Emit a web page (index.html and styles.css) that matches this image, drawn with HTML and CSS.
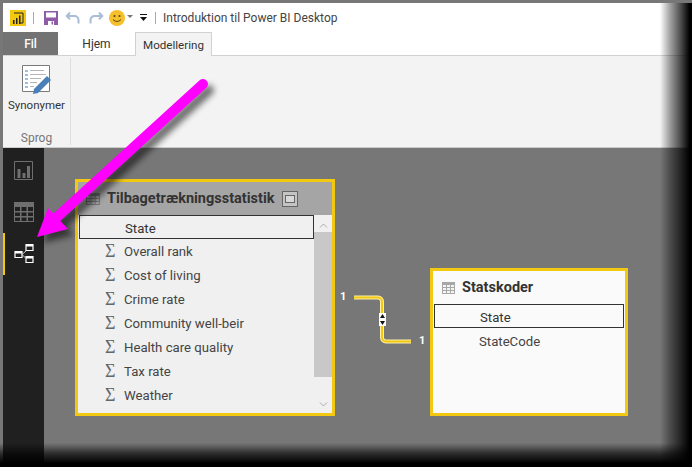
FILE: index.html
```html
<!DOCTYPE html>
<html lang="en">
<head>
  <meta charset="UTF-8" />
  <title>Introduktion til Power BI Desktop</title>
  <link rel="stylesheet" href="styles.css">
</head>
<body>
  <div class="app">
    <div class="titleBar">
      <svg class="pbiLogo" width="16" height="16" viewBox="0 0 16 16">
        <rect width="16" height="16" fill="#f2c811"/>
        <path d="M4 3h9v10h-3" fill="none" stroke="#222" stroke-width="1"/>
        <path d="M3 10h1.500v4H3zM6 8h1.500v6H6zM9 5.500h1.500V14H9z" fill="#222"/>
      </svg>
      <span class="qaSep"></span>
      <svg class="qaIcon" width="14" height="14" viewBox="0 0 14 14">
        <path d="M0 0h14v14H0z" fill="#8e5ba6"/>
        <path d="M2 1.500h10v5H2z" fill="#fff"/>
        <path d="M4 10h6v4H4z" fill="#fff"/>
        <path d="M7.500 10.500h1.500v3H7.500z" fill="#8e5ba6"/>
      </svg>
      <svg class="qaUndo" width="16" height="14" viewBox="0 0 16 14">
        <path d="M5 1.500 1.800 5 5 8.200M2 5h7.500a4 4 0 0 1 4 4v3.500" fill="none" stroke="#a9bdd6" stroke-width="2"/>
      </svg>
      <svg class="qaRedo" width="16" height="14" viewBox="0 0 16 14">
        <path d="M11 1.500 14.200 5 11 8.200M14 5H6.500a4 4 0 0 0-4 4v3.500" fill="none" stroke="#a9bdd6" stroke-width="2"/>
      </svg>
      <svg class="qaSmile" width="16" height="16" viewBox="0 0 16 16">
        <circle cx="8" cy="8" r="8" fill="#f5c02c"/>
        <circle cx="5.500" cy="6" r="1.100" fill="#5a4a10"/>
        <circle cx="10.500" cy="6" r="1.100" fill="#5a4a10"/>
        <path d="M4 9.500q4 4 8 0" fill="none" stroke="#5a4a10" stroke-width="1"/>
      </svg>
      <span class="caretSmall"></span>
      <svg class="qaMore" width="7" height="7" viewBox="0 0 7 7">
        <path d="M0 0h7v1H0zM0 3h7L3.500 7z" fill="#111"/>
      </svg>
      <span class="qaSep qaSepLast"></span>
      <span class="docTitle">Introduktion til Power BI Desktop</span>
    </div>

    <div class="tabRow">
      <div class="tab tabFile">Fil</div>
      <div class="tab tabHome">Hjem</div>
      <div class="tab tabActive">Modellering</div>
    </div>

    <div class="ribbon">
      <div class="ribbonGroup">
        <div class="ribbonBtn">
          <svg width="30" height="30" viewBox="0 0 30 30">
            <path d="M.5.500h27v26H.5z" fill="#fff" stroke="#7a7a7a"/>
            <path d="M3 6h3M3 10h3M3 14h3M3 18h3M3 22h3" stroke="#3f7fbf"/>
            <path d="M8 5.500h14M8 9.500h16M8 13.500h11M8 17.500h7M8 21.500h4" stroke="#b5b5b5"/>
            <path d="M12 24 25 11l4 4-13 13-5 1z" fill="#4a7fb8"/>
          </svg>
          <span>Synonymer</span>
        </div>
        <div class="groupLabel">Sprog</div>
      </div>
    </div>

    <div class="workspace">
      <div class="sideNav">
        <div class="navItem">
          <svg width="19" height="19" viewBox="0 0 19 19">
            <path d="M.5.500h18v18H.5z" fill="none" stroke="#6f6f6f"/>
            <path d="M3.500 8h3v9h-3zM8.500 12h3v5h-3zM13 5h3v12h-3z" fill="#6f6f6f"/>
          </svg>
        </div>
        <div class="navItem">
          <svg width="20" height="20" viewBox="0 0 20 20">
            <path d="M0 0h20v20H0z" fill="#6f6f6f"/>
            <path d="M1 5h5v4H1zM7.500 5h5v4h-5zM14 5h5v4h-5zM1 10.500h5v3.500H1zM7.500 10.500h5v3.500h-5zM14 10.500h5v3.500h-5zM1 15.500h5V19H1zM7.500 15.500h5V19h-5zM14 15.500h5V19h-5z" fill="#202020"/>
          </svg>
        </div>
        <div class="navItem navCurrent">
          <svg width="20" height="20" viewBox="0 0 20 20">
            <path d="M1 7.500h7v6H1zM12 .500h7v6h-7zM12 12.500h7v6h-7z" fill="none" stroke="#fff" stroke-width="1.200"/>
            <path d="M1 7.500h7v2H1zM12 .500h7v2h-7zM12 12.500h7v2h-7z" fill="#fff"/>
            <path d="M8 10.500 12 7M8 10.500l4 4" fill="none" stroke="#ccc"/>
          </svg>
        </div>
      </div>

      <div class="canvas">
        <div class="tableCard cardStats">
          <div class="cardHead headDim">
            <svg class="gridIcon" width="14" height="12" viewBox="0 0 14 12">
              <path d="M0 0h14v12H0z" fill="#777"/>
              <path d="M1 3h3.500v2H1zM5.300 3h3.500v2H5.300zM9.600 3h3.400v2H9.600zM1 6h3.500v2H1zM5.300 6h3.500v2H5.300zM9.600 6h3.400v2H9.600zM1 9h3.500v2H1zM5.300 9h3.500v2H5.300zM9.600 9h3.400v2H9.600z" fill="#a5a5a5"/>
            </svg>
            <span class="cardTitle">Tilbagetrækningsstatistik</span>
            <span class="restoreBtn"><span></span></span>
          </div>
          <div class="cardBody">
            <div class="fieldList">
              <div class="field fieldCurrent"><span class="sigma"></span>State</div>
              <div class="field"><span class="sigma">Σ</span>Overall rank</div>
              <div class="field"><span class="sigma">Σ</span>Cost of living</div>
              <div class="field"><span class="sigma">Σ</span>Crime rate</div>
              <div class="field"><span class="sigma">Σ</span>Community well-beir</div>
              <div class="field"><span class="sigma">Σ</span>Health care quality</div>
              <div class="field"><span class="sigma">Σ</span>Tax rate</div>
              <div class="field"><span class="sigma">Σ</span>Weather</div>
            </div>
            <div class="scrollBar">
              <svg class="scrollArrow" width="9" height="5" viewBox="0 0 9 5"><path d="M1 4.500l3.500-3.500 3.500 3.500" fill="none" stroke="#aaa"/></svg>
              <div class="scrollThumb"></div>
              <svg class="scrollArrow" width="9" height="5" viewBox="0 0 9 5"><path d="M1 .500l3.500 3.500 3.500-3.500" fill="none" stroke="#aaa"/></svg>
            </div>
          </div>
        </div>

        <div class="tableCard cardCodes">
          <div class="cardHead">
            <svg class="gridIcon" width="13" height="12" viewBox="0 0 13 12">
              <path d="M0 0h13v12H0z" fill="#a8a8a8"/>
              <path d="M1 3h3v2H1zM5 3h3v2H5zM9 3h3v2H9zM1 6h3v2H1zM5 6h3v2H5zM9 6h3v2H9zM1 9h3v2H1zM5 9h3v2H5zM9 9h3v2H9z" fill="#f4f4f4"/>
            </svg>
            <span class="cardTitle">Statskoder</span>
          </div>
          <div class="fieldList">
            <div class="field fieldCurrent"><span class="sigma"></span>State</div>
            <div class="field"><span class="sigma"></span>StateCode</div>
          </div>
        </div>

        <svg class="relLine" width="70" height="60" viewBox="0 0 70 60">
          <path d="M0 2.500h24a4 4 0 0 1 4 4v36a4 4 0 0 0 4 4h25" fill="none" stroke="#fff0a8" stroke-width="4"/>
          <path d="M0 2.500h24a4 4 0 0 1 4 4v36a4 4 0 0 0 4 4h25" fill="none" stroke="#f2c811" stroke-width="2"/>
          <path d="M25 18h7v13h-7z" fill="#fff"/>
          <path d="M28.500 19l2.500 4h-5zM28.500 30l-2.500-4h5z" fill="#111"/>
        </svg>
        <span class="relOne oneLeft">1</span>
        <span class="relOne oneRight">1</span>
      </div>
    </div>
  </div>

  <div class="edgeRight"></div>
  <div class="edgeBottom"></div>

  <svg class="callout" width="692" height="467" viewBox="0 0 692 467">
    <defs>
      <filter id="arrowShadow" x="-20%" y="-20%" width="140%" height="140%">
        <feGaussianBlur stdDeviation="3"/>
      </filter>
    </defs>
    <g fill="#000" stroke="#000" opacity="0.55" filter="url(#arrowShadow)" transform="translate(6 6)">
      <path d="M203 84 56 218" stroke-width="10" stroke-linecap="round"/>
      <path d="M37 237 48 208 68 229z" stroke="none"/>
    </g>
    <path d="M203 84 56 218" stroke="#ff00ff" stroke-width="10" stroke-linecap="round"/>
    <path d="M37 237 48 208 68 229z" fill="#ff00ff"/>
  </svg>
</body>
</html>
```

FILE: styles.css
```css
html, body {
  margin: 0;
  height: 100%;
}

body {
  background: #777;
  font-family: Roboto, "Open Sans", sans-serif;
  font-size: 12px;
  color: #333;
  overflow: hidden;
  position: relative;
  width: 692px;
  height: 467px;
}

.app {
  display: flex;
  flex-direction: column;
  height: 464px;
  padding: 3px 0 0 3px;
}

.titleBar {
  display: flex;
  align-items: center;
  height: 29px;
  background: white;
  padding-left: 7px;
}

.pbiLogo {
  margin-right: 7px;
}

.qaSep {
  width: 1px;
  height: 12px;
  background: #aaa;
  margin-right: 10px;
}

.qaIcon {
  margin-right: 7px;
}

.qaUndo {
  margin-right: 7px;
}

.qaRedo {
  margin-right: 5px;
}

.caretSmall {
  width: 0;
  height: 0;
  margin: 0 7px 2px 2px;
  border-left: 3px solid transparent;
  border-right: 3px solid transparent;
  border-top: 3px solid #777;
}

.qaMore {
  margin-right: 8px;
}

.qaSepLast {
  margin-right: 7px;
}

.docTitle {
  color: #444;
}

.tabRow {
  display: flex;
  height: 23px;
  background: white;
  border-bottom: 1px solid #d2d2d2;
}

.tab {
  display: flex;
  align-items: center;
  justify-content: center;
  color: #333;
}

.tabFile {
  width: 55px;
  background: #737373;
  color: white;
  font-weight: 500;
}

.tabHome {
  width: 77px;
}

.tabActive {
  width: 77px;
  height: 24px;
  box-sizing: border-box;
  background: #f3f3f3;
  border: 1px solid #d2d2d2;
  border-bottom: none;
  font-size: 11.600px;
}

.ribbon {
  display: flex;
  height: 91px;
  background: #f3f3f3;
  border-bottom: 1px solid #ccc;
}

.ribbonGroup {
  display: flex;
  flex-direction: column;
  align-items: center;
  width: 67px;
  margin: 2px 0;
  border-right: 1px solid #ddd;
}

.ribbonBtn {
  display: flex;
  flex-direction: column;
  align-items: center;
  gap: 3px;
  padding-top: 7px;
  font-size: 11.500px;
  color: #333;
}

.groupLabel {
  margin-top: auto;
  font-size: 12px;
  color: #777;
}

.workspace {
  display: flex;
  flex: 1;
}

.sideNav {
  display: flex;
  flex-direction: column;
  width: 41px;
  padding-top: 1px;
  background: #202020;
}

.navItem {
  display: flex;
  align-items: center;
  justify-content: center;
  height: 42px;
}

.navCurrent {
  box-shadow: inset 2px 0 0 #f2c811;
}

.canvas {
  flex: 1;
  position: relative;
  background: #777;
}

.tableCard {
  position: absolute;
  box-sizing: border-box;
  display: flex;
  flex-direction: column;
  border: 3px solid #f2c811;
  background: #fafafa;
}

.cardStats {
  left: 31px;
  top: 31px;
  width: 260px;
  height: 237px;
  background: #f0f0f0;
}

.cardCodes {
  left: 386px;
  top: 120px;
  width: 198px;
  height: 148px;
}

.cardHead {
  display: flex;
  align-items: center;
  height: 33px;
  padding-left: 9px;
  flex: none;
}

.headDim {
  background: #a5a5a5;
  padding-left: 8px;
}

.gridIcon {
  margin-right: 7px;
}

.cardTitle {
  font-size: 14.500px;
  font-weight: 700;
  color: #333;
}

.restoreBtn {
  display: flex;
  align-items: center;
  justify-content: center;
  box-sizing: border-box;
  width: 16px;
  height: 16px;
  margin-left: 7px;
  border: 1px solid #666;
  background: #c4c4c4;
}

.restoreBtn span {
  width: 8px;
  height: 6px;
  border: 1px solid #666;
  background: #d8d8d8;
}

.cardBody {
  display: flex;
  flex: 1;
}

.fieldList {
  flex: 1;
  padding: 0 1px;
}

.cardBody .fieldList {
  padding-right: 0;
}

.field {
  display: flex;
  align-items: center;
  box-sizing: border-box;
  height: 24px;
  padding-top: 1px;
  font-size: 13.200px;
  color: #444;
}

.cardCodes .field {
  padding-top: 3px;
}

.fieldCurrent {
  border: 1px solid #333;
  color: #333;
  padding-top: 2px;
}

.sigma {
  width: 45px;
  flex: none;
  padding-left: 26px;
  box-sizing: border-box;
  font-family: "Liberation Serif", serif;
  font-size: 18px;
  color: #666;
}

.scrollBar {
  display: flex;
  flex-direction: column;
  align-items: center;
  width: 18px;
  flex: none;
  padding-top: 8px;
}

.scrollThumb {
  align-self: stretch;
  height: 145px;
  margin-top: 4px;
  margin-bottom: 25px;
  background: #c8c8c8;
}

.relLine {
  position: absolute;
  left: 310px;
  top: 147px;
}

.relOne {
  position: absolute;
  font-size: 11px;
  font-weight: 700;
  color: white;
}

.oneLeft {
  left: 296px;
  top: 142px;
}

.oneRight {
  left: 375px;
  top: 186px;
}

.edgeRight {
  position: absolute;
  top: 3px;
  right: 0;
  width: 32px;
  height: 464px;
  background: linear-gradient(to right, rgba(0, 0, 0, 0), rgba(0, 0, 0, 0.35) 30%, rgba(0, 0, 0, 0.7) 65%, #000 92%);
}

.edgeBottom {
  position: absolute;
  left: 0;
  bottom: 0;
  width: 100%;
  height: 24px;
  background: linear-gradient(to bottom, rgba(0, 0, 0, 0), rgba(0, 0, 0, 0.65) 45%, #000 85%);
}

.callout {
  position: absolute;
  left: 0;
  top: 0;
  pointer-events: none;
}
```
